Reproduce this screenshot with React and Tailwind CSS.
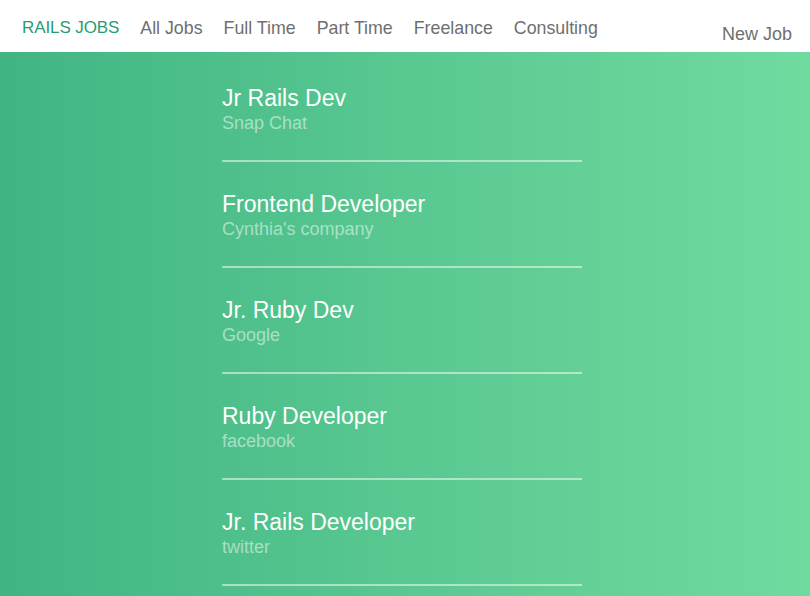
import React from "react";

const jobs = [
  { title: "Jr Rails Dev", company: "Snap Chat" },
  { title: "Frontend Developer", company: "Cynthia's company" },
  { title: "Jr. Ruby Dev", company: "Google" },
  { title: "Ruby Developer", company: "facebook" },
  { title: "Jr. Rails Developer", company: "twitter" },
];

const links = ["All Jobs", "Full Time", "Part Time", "Freelance", "Consulting"];

const App = () => {
  return (
    <div className="min-h-[596px] font-['Liberation_Sans',Arial,sans-serif] bg-gradient-to-r from-[#40b583] to-[#70db9f]">
      {/* Header */}
      <header className="h-[52px] bg-white flex items-start justify-between pl-[22px] pr-[18px]">
        <nav className="flex items-center gap-[21px] pt-[17px]">
          <a href="#" className="text-[17px] leading-[22px] text-[#2b9c72] tracking-[-0.1px]">
            RAILS JOBS
          </a>
          {links.map((link) => (
            <a
              key={link}
              href="#"
              className="text-[17.8px] leading-[22px] text-[#6f6f6f]"
            >
              {link}
            </a>
          ))}
        </nav>
        <a href="#" className="text-[18px] leading-[22px] text-[#6f6f6f] pt-[23px]">
          New Job
        </a>
      </header>

      {/* Job list */}
      <main className="pl-[222px] pt-[4px]">
        <ul className="w-[360px]">
          {jobs.map((job) => (
            <li
              key={job.title}
              className="pt-[27px] pb-[26px] border-b-2 border-white/50"
            >
              <h2 className="text-[23px] leading-[30px] text-white">
                {job.title}
              </h2>
              <p className="text-[18px] leading-[22px] -mt-[1px] text-white/50">
                {job.company}
              </p>
            </li>
          ))}
        </ul>
      </main>
    </div>
  );
};

export default App;
